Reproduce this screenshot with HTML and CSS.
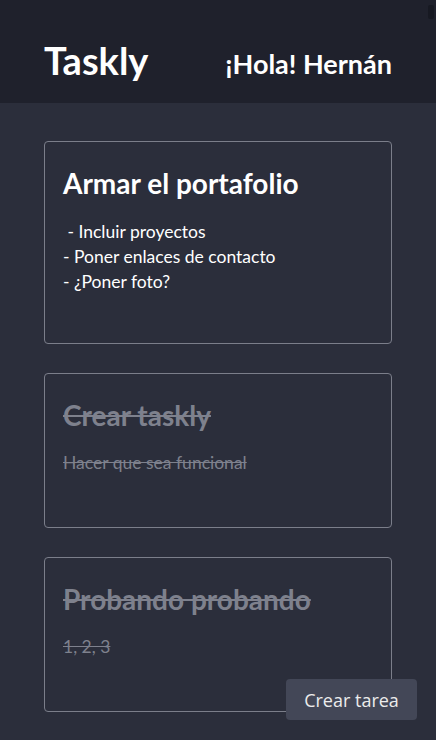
FILE: index.html
```html
<!DOCTYPE html>
<html lang="es">
<head>
<meta charset="utf-8">
<title>Taskly</title>
<link rel="stylesheet" href="styles.css">
</head>
<body>
<header class="topbar">
  <h1 class="brand">Taskly</h1>
  <p class="greeting">¡Hola! Hernán</p>
</header>
<main class="tasks">
  <article class="task">
    <h2 class="task-title">Armar el portafolio</h2>
    <p class="task-body">&nbsp;- Incluir proyectos<br>- Poner enlaces de contacto<br>- ¿Poner foto?</p>
  </article>
  <article class="task task-done">
    <h2 class="task-title">Crear taskly</h2>
    <p class="task-body">Hacer que sea funcional</p>
  </article>
  <article class="task task-done">
    <h2 class="task-title">Probando probando</h2>
    <p class="task-body">1, 2, 3</p>
  </article>
</main>
<button class="create-btn">Crear tarea</button>
<div class="scroll-thumb"></div>
</body>
</html>
```
FILE: styles.css
```css
* { box-sizing: border-box; }
html, body { margin: 0; padding: 0; }
body {
  background: #2b2e3b;
  font-family: Lato, "Noto Sans", sans-serif;
  color: #ffffff;
  height: 740px;
  overflow: hidden;
}
.topbar {
  background: #1f212c;
  height: 103px;
  display: flex;
  align-items: center;
  justify-content: space-between;
  padding: 20px 44px 0 44px;
}
.brand {
  margin: 0;
  font-size: 38px;
  font-weight: 700;
  line-height: 1;
  margin-top: -4px;
}
.greeting {
  margin: 0;
  font-size: 27px;
  font-weight: 700;
  margin-top: 4px;
}
.tasks {
  display: flex;
  flex-direction: column;
  gap: 29px;
  padding: 38px 44px 0 44px;
}
.task {
  border: 1px solid #7b7e8a;
  border-radius: 4px;
  padding: 24px 18px 20px 18px;
  min-height: 155px;
}
.task:first-child { min-height: 203px; }
.task-title {
  margin: 0;
  font-size: 28px;
  font-weight: 700;
  line-height: 34px;
}
.task-body {
  margin: 19px 0 0 0;
  font-size: 17.5px;
  line-height: 25px;
}
.task-done .task-body { margin-top: 18px; }
.task-done .task-title,
.task-done .task-body {
  color: #7e818d;
  text-decoration: line-through;
}
.create-btn {
  position: fixed;
  left: 286px;
  top: 679px;
  width: 131px;
  height: 41px;
  background: #434757;
  color: #ececec;
  border: none;
  border-radius: 4px;
  font-family: "Open Sans", "Noto Sans", sans-serif;
  font-size: 18px;
  padding: 0;
}
.scroll-thumb {
  position: fixed;
  left: 428px;
  top: 5px;
  width: 6px;
  height: 14px;
  background: #171922;
  border-radius: 2px;
}
```
